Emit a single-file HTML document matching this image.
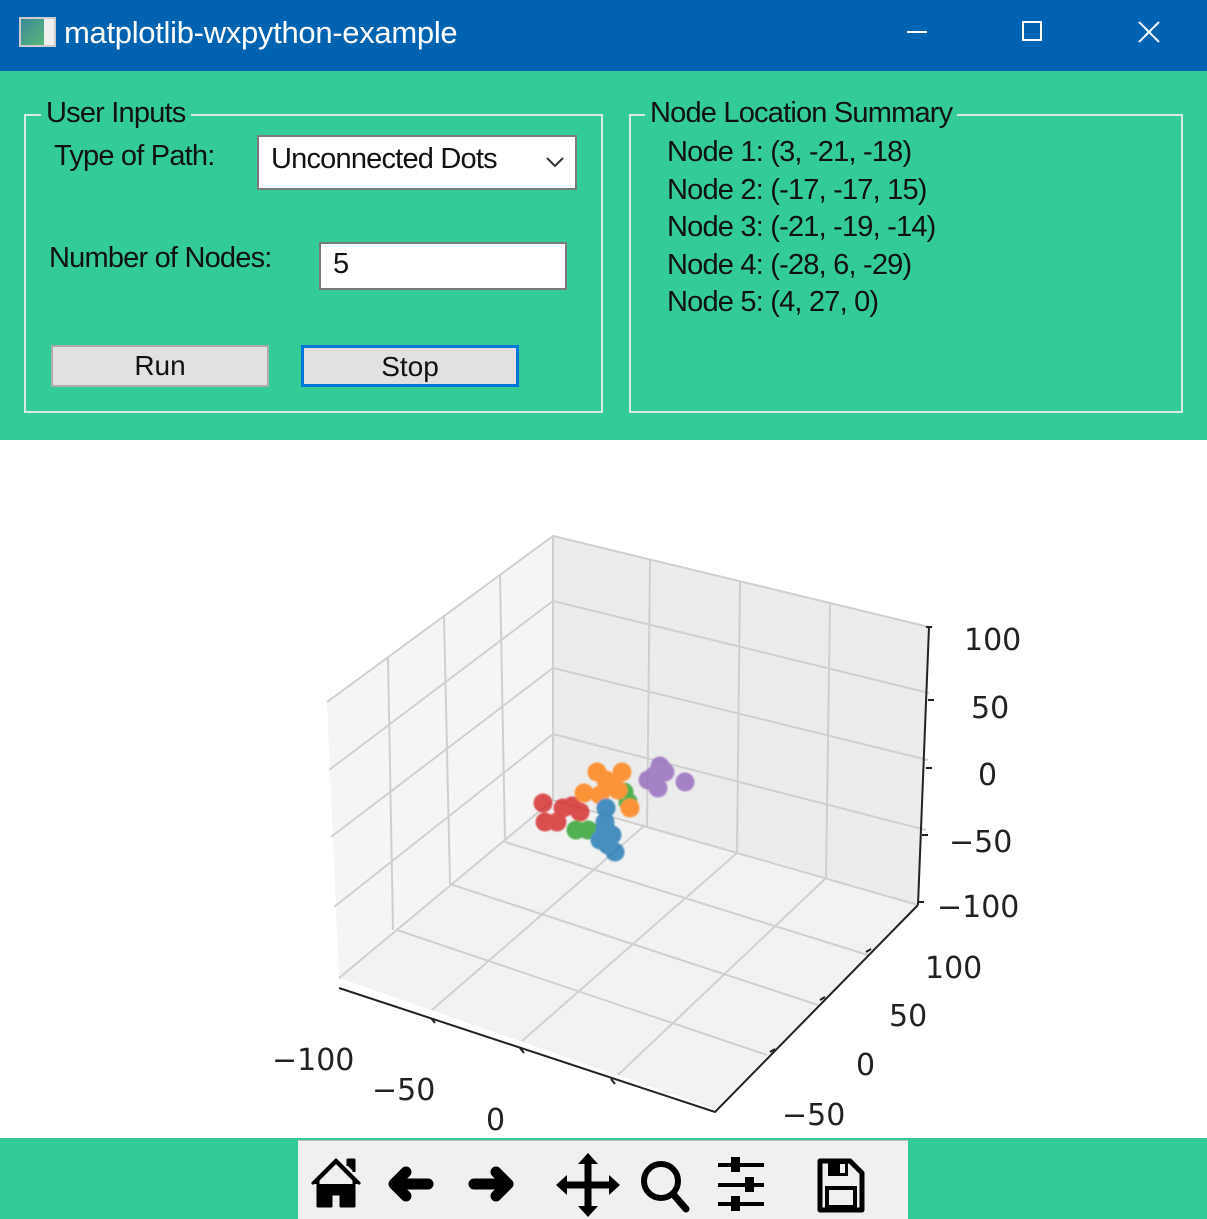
<!DOCTYPE html>
<html><head><meta charset="utf-8"><style>
*{margin:0;padding:0;box-sizing:border-box}
body{width:1207px;height:1219px;overflow:hidden;background:#fff;font-family:"Liberation Sans",sans-serif;position:relative}
.abs{position:absolute}
#title{left:0;top:0;width:1207px;height:71px;background:#0063b1;color:#fff}
#top{left:0;top:71px;width:1207px;height:369px;background:#33cc99}
.grp{border:2px solid #d8ece4;}
.lbl{font-size:29px;color:#111;white-space:nowrap;letter-spacing:-0.8px}
.box{background:#fff;border:2px solid #7a7a7a}
.btn{background:#e1e1e1;border:2px solid #adadad;text-align:center;font-size:28px;line-height:37px;color:#111}
</style></head><body>
<div id="title" class="abs">
  <div class="abs" style="left:19px;top:17px;width:37px;height:30px;background:linear-gradient(135deg,#3a8a9a,#5fbf6f);border:2px solid #ccc"></div>
  <div class="abs" style="left:44px;top:19px;width:10px;height:26px;background:#eee"></div>
  <div class="abs" style="left:64px;top:15px;font-size:31px;letter-spacing:-0.3px">matplotlib-wxpython-example</div>
  <div class="abs" style="left:907px;top:31px;width:20px;height:2px;background:#fff"></div>
  <div class="abs" style="left:1022px;top:21px;width:20px;height:20px;border:2px solid #fff"></div>
  <svg class="abs" style="left:1137px;top:20px" width="24" height="24"><path d="M2 2L22 22M22 2L2 22" stroke="#fff" stroke-width="2"/></svg>
</div>
<div id="top" class="abs"></div>
<div class="abs grp" style="left:24px;top:114px;width:579px;height:299px"></div>
<div class="abs lbl" style="left:41px;top:97px;background:#33cc99;padding:0 5px">User Inputs</div>
<div class="abs lbl" style="left:54px;top:140px">Type of Path:</div>
<div class="abs box" style="left:257px;top:135px;width:320px;height:55px"></div>
<div class="abs lbl" style="left:271px;top:143px">Unconnected Dots</div>
<svg class="abs" style="left:545px;top:156px" width="20" height="12"><path d="M2 2L10 10L18 2" stroke="#333" stroke-width="2" fill="none"/></svg>
<div class="abs lbl" style="left:49px;top:242px">Number of Nodes:</div>
<div class="abs box" style="left:319px;top:242px;width:248px;height:48px"></div>
<div class="abs lbl" style="left:333px;top:248px">5</div>
<div class="abs btn" style="left:51px;top:345px;width:218px;height:42px">Run</div>
<div class="abs btn" style="left:301px;top:345px;width:218px;height:42px;border:3px solid #0078d7;line-height:38px">Stop</div>

<div class="abs grp" style="left:629px;top:114px;width:554px;height:299px"></div>
<div class="abs lbl" style="left:645px;top:97px;background:#33cc99;padding:0 5px">Node Location Summary</div>
<div class="abs lbl" style="left:667px;top:134px;line-height:37.5px">Node 1: (3, -21, -18)<br>Node 2: (-17, -17, 15)<br>Node 3: (-21, -19, -14)<br>Node 4: (-28, 6, -29)<br>Node 5: (4, 27, 0)</div>

<svg class="abs" style="left:0;top:440px" width="1207" height="700" viewBox="0 440 1207 700">
 <defs><filter id="b"><feGaussianBlur stdDeviation="0.8"/></filter></defs>
 <g stroke="none">
  <polygon points="327,702 553,536 553,800 339,978" fill="#f5f5f5"/>
  <polygon points="553,536 929,627 918,905 553,800" fill="#ececec"/>
  <polygon points="339,978 553,800 918,905 715,1109" fill="#f2f2f2"/>
 </g>
 <g stroke="#cfcfcf" stroke-width="2" fill="none">
  <path d="M327,702L553,536L929,627M553,536L553,800M339,978L553,800L918,905"/>
  <path d="M388,658L393,930M444,617L450,884M500,575L505,842"/>
  <path d="M329,770L553,601L929,693M331,837L553,668L928,760M334,907L553,734L926,830"/>
  <path d="M650,560L647,827M740,582L737,853M830,604L826,878"/>
  <path d="M432,1010L644,826M522,1041L737,853M618,1075L826,878"/>
  <path d="M397,930L767,1055M450,884L818,1005M505,842L868,955"/>
 </g>
 <g stroke="#222" stroke-width="2" fill="none">
  <path d="M339,988L715,1112L918,905M929,627L918,905"/>
  <path d="M431,1018l4,5M520,1048l4,5M611,1079l4,5M866,952l5,-3M820,1000l5,-3M770,1052l5,-3M926,627h6M928,700h6M926,768h6M922,835h6M918,902h6"/>
 </g>
 <g opacity="0.8" filter="url(#b)">
  <g fill="#d62728"><circle cx="543" cy="803" r="9.5"/><circle cx="545" cy="822" r="9.5"/><circle cx="557" cy="822" r="9.5"/><circle cx="563" cy="808" r="9.5"/><circle cx="572" cy="806" r="9.5"/><circle cx="580" cy="812" r="9.5"/></g>
  <g fill="#2ca02c"><circle cx="576" cy="830" r="9.5"/><circle cx="588" cy="830" r="9.5"/><circle cx="624" cy="792" r="9.5"/><circle cx="628" cy="802" r="9.5"/><circle cx="605" cy="825" r="9.5"/></g>
  <g fill="#ff7f0e"><circle cx="597" cy="772" r="9.5"/><circle cx="606" cy="780" r="9.5"/><circle cx="622" cy="772" r="9.5"/><circle cx="618" cy="790" r="9.5"/><circle cx="584" cy="793" r="9.5"/><circle cx="600" cy="795" r="9.5"/><circle cx="630" cy="808" r="9.5"/><circle cx="610" cy="785" r="9.5"/></g>
  <g fill="#1f77b4"><circle cx="605" cy="822" r="9.5"/><circle cx="600" cy="840" r="9.5"/><circle cx="608" cy="845" r="9.5"/><circle cx="615" cy="852" r="9.5"/><circle cx="605" cy="830" r="9.5"/><circle cx="612" cy="835" r="9.5"/><circle cx="606" cy="808" r="9.5"/></g>
  <g fill="#9467bd"><circle cx="660" cy="766" r="9.5"/><circle cx="665" cy="772" r="9.5"/><circle cx="648" cy="780" r="9.5"/><circle cx="658" cy="788" r="9.5"/><circle cx="685" cy="782" r="9.5"/><circle cx="655" cy="775" r="9.5"/></g>
 </g>
 <g font-family="DejaVu Sans,sans-serif" font-size="30" fill="#222">
  <text x="964" y="650">100</text><text x="971" y="718">50</text><text x="978" y="785">0</text><text x="949" y="852">−50</text><text x="937" y="917">−100</text>
  <text x="925" y="978">100</text><text x="889" y="1026">50</text><text x="856" y="1075">0</text><text x="782" y="1125">−50</text>
  <text x="272" y="1070">−100</text><text x="372" y="1100">−50</text><text x="486" y="1130">0</text><text x="565" y="1162">−50</text>
 </g>
</svg>

<div class="abs" style="left:0;top:1138px;width:1207px;height:81px;background:#33cc99"></div>
<div class="abs" style="left:298px;top:1140px;width:610px;height:79px;background:#f0f0f0;border-top:1px solid #bbb"></div>
<svg class="abs" style="left:298px;top:1140px" width="610" height="79">
 <path d="M14 44L38 20L62 44M20 40V66H33V54H43V66H56V40L38 22Z M50 26V20h6v12" fill="#000" stroke="#000" stroke-width="3" stroke-linejoin="round"/>
 <path d="M108 32L96 44L108 56M96 44H130" stroke="#000" stroke-width="11" fill="none" stroke-linecap="round" stroke-linejoin="round"/>
 <path d="M198 32L210 44L198 56M210 44H176" stroke="#000" stroke-width="11" fill="none" stroke-linecap="round" stroke-linejoin="round"/>
 <path d="M290 20V70M265 45H315" stroke="#000" stroke-width="7"/>
 <path d="M280 24L290 13L300 24ZM280 66L290 77L300 66ZM269 35L258 45L269 55ZM311 35L322 45L311 55Z" fill="#000"/>
 <circle cx="363" cy="41" r="17" fill="none" stroke="#000" stroke-width="6"/>
 <path d="M375 54L388 69" stroke="#000" stroke-width="7" stroke-linecap="round"/>
 <path d="M420 25H466M420 45H466M420 64H466" stroke="#000" stroke-width="4"/>
 <rect x="433" y="17" width="9" height="15" fill="#000"/><rect x="447" y="37" width="9" height="15" fill="#000"/><rect x="433" y="56" width="9" height="15" fill="#000"/>
 <path d="M522 21H552L564 33V70H522Z" fill="none" stroke="#000" stroke-width="5" stroke-linejoin="round"/>
 <rect x="530" y="21" width="20" height="15" fill="#000"/><rect x="542" y="24" width="5" height="9" fill="#f0f0f0"/>
 <rect x="529" y="48" width="28" height="19" fill="none" stroke="#000" stroke-width="4"/>
</svg>
</body></html>
